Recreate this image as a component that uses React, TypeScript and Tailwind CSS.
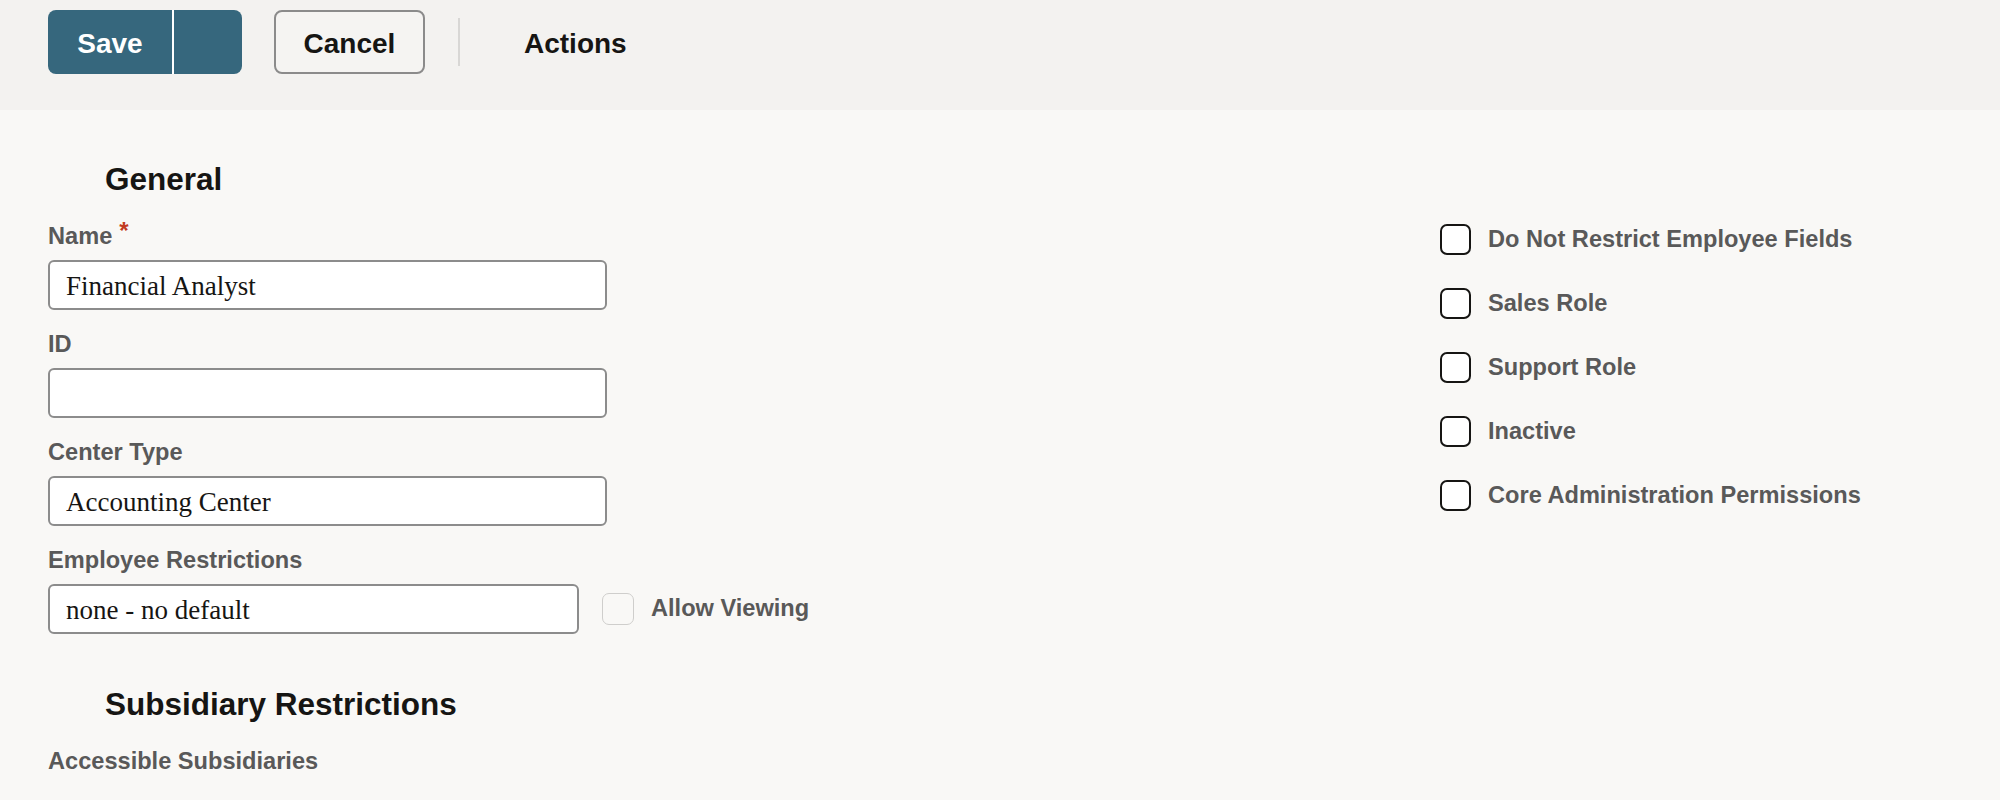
import React from "react";

const labelCls =
  "h-[30px] leading-[30px] text-[23.6px] font-bold text-[#595959] whitespace-nowrap";
const inputCls =
  "h-[50px] border-2 border-[#8c8c8c] rounded-[6px] bg-white pl-[16px] pt-[3px] flex items-center text-[27px] text-[#161513] font-['Liberation_Serif','Times_New_Roman',serif]";

function Field({
  label,
  value,
  required,
  first,
}: {
  label: string;
  value: string;
  required?: boolean;
  first?: boolean;
}) {
  return (
    <div className={first ? "" : "mt-[19px]"}>
      <div className={labelCls}>
        {label}
        {required && (
          <span className="relative -top-[5px] ml-[7px] text-[24px] text-[#c23b22]">*</span>
        )}
      </div>
      <div className={`mt-[9px] w-[559px] ${inputCls}`}>{value}</div>
    </div>
  );
}

function Check({ label }: { label: string }) {
  return (
    <div className="flex items-center h-[31px]">
      <div className="w-[31px] h-[31px] rounded-[7px] border-[2.5px] border-[#161513] bg-white" />
      <span className="ml-[17px] text-[23.6px] font-bold text-[#595959] whitespace-nowrap">
        {label}
      </span>
    </div>
  );
}

export default function App() {
  return (
    <div className="w-[2000px] min-h-[800px] bg-[#f9f8f6] font-['Liberation_Sans',Arial,sans-serif] text-[#161513]">
      <header className="h-[110px] bg-[#f3f2f0] flex items-start pt-[10px] pl-[48px]">
        <div className="flex h-[64px] rounded-[8px] overflow-hidden bg-[#36677d]">
          <button className="w-[124px] h-full pt-[4px] text-white text-[28px] font-bold">
            Save
          </button>
          <div className="w-[2px] h-full bg-white" />
          <button className="w-[68px] h-full" aria-label="More save options" />
        </div>
        <button className="ml-[32px] w-[151px] h-[64px] pt-[4px] border-2 border-[#8b8b8b] rounded-[8px] bg-[#f5f4f2] text-[28px] font-bold text-[#161513]">
          Cancel
        </button>
        <div className="ml-[33px] mt-[8px] w-[2px] h-[48px] bg-[#d8d7d5]" />
        <span className="ml-[64px] h-[64px] pt-[4px] flex items-center text-[28px] font-bold text-[#161513]">
          Actions
        </span>
      </header>

      <main className="pl-[48px]">
        <h2 className="mt-[49px] ml-[57px] h-[40px] leading-[40px] text-[31.5px] font-bold text-[#161513]">
          General
        </h2>

        <div className="flex mt-[22px]">
          <div className="w-[1392px]">
            <Field label="Name" value="Financial Analyst" required first />
            <Field label="ID" value="" />
            <Field label="Center Type" value="Accounting Center" />
            <div className="mt-[19px]">
              <div className={labelCls}>Employee Restrictions</div>
              <div className="mt-[9px] flex items-center">
                <div className={`w-[531px] ${inputCls}`}>none - no default</div>
                <div className="ml-[23px] w-[32px] h-[32px] rounded-[7px] border-[1.5px] border-[#cfcecc] bg-[#f9f8f6]" />
                <span className="ml-[17px] text-[23.6px] font-bold text-[#595959] whitespace-nowrap">
                  Allow Viewing
                </span>
              </div>
            </div>
          </div>

          <div className="mt-[3px] flex flex-col gap-[33px]">
            <Check label="Do Not Restrict Employee Fields" />
            <Check label="Sales Role" />
            <Check label="Support Role" />
            <Check label="Inactive" />
            <Check label="Core Administration Permissions" />
          </div>
        </div>

        <h2 className="mt-[50px] ml-[57px] h-[40px] leading-[40px] text-[31.5px] font-bold text-[#161513]">
          Subsidiary Restrictions
        </h2>
        <div className={`mt-[22px] ${labelCls}`}>Accessible Subsidiaries</div>
      </main>
    </div>
  );
}
